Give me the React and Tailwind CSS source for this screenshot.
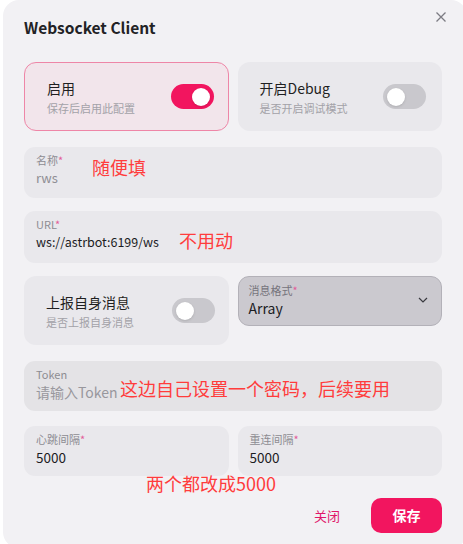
import React from "react";

const font = { fontFamily: '"Noto Sans CJK SC", Inter, "Noto Sans", sans-serif' };

function Toggle({ on }) {
  return (
    <div
      className={`relative h-[25px] w-[43px] shrink-0 rounded-full ${on ? "bg-[#f2155f]" : "bg-[#c9c8cd]"}`}
    >
      <div
        className={`absolute top-[3.5px] h-[18px] w-[18px] rounded-full bg-white shadow-sm ${on ? "left-[21px]" : "left-[4px]"}`}
      />
    </div>
  );
}

function SwitchCard({ title, sub, on, active, pr = "pr-[14px]" }) {
  return (
    <div
      className={`flex h-[69px] items-center justify-between rounded-[12px] pl-[22px] ${pr} ${
        active ? "border border-[#ee86a7] bg-[#f2e5eb]" : "bg-[#e9e8ec]"
      }`}
    >
      <div className="flex flex-col">
        <div className="text-[14px] leading-[20px] text-[#1f1f22]">{title}</div>
        <div className="mt-[2px] text-[11px] leading-[16px] text-[#a3a2a8]">{sub}</div>
      </div>
      <Toggle on={on} />
    </div>
  );
}

function Field({ label, required, value, valueClass = "text-[#1c1c1f] text-[13px]", h = "h-[51px]", bg = "bg-[#e9e8ec]" }) {
  return (
    <div className={`relative flex ${h} flex-col rounded-[11px] ${bg} pl-[12px] pt-[5px]`}>
      <div className="text-[11px] leading-[16px] text-[#8d8c92]">
        {label}
        {required && <span className="text-[#e25d9a]">*</span>}
      </div>
      <div className={`leading-[20px] ${valueClass}`}>{value}</div>
    </div>
  );
}

const Note = ({ className, children }) => (
  <div className={`absolute whitespace-nowrap text-[18px] leading-[22px] text-[#ff3c3c] ${className}`}>{children}</div>
);

export default function App() {
  return (
    <div className="h-[544px] w-[463px] overflow-hidden bg-white" style={font}>
      <div className="relative ml-[3px] h-[548px] w-[464px] rounded-[16px] bg-[#f2f1f4] pl-[21px] pr-[25px] pt-[15px]">
        <div className="absolute right-[20px] top-[11px] text-[#7c7b82]">
          <svg width="12" height="12" viewBox="0 0 12 12" fill="none" stroke="currentColor" strokeWidth="1.3">
            <path d="M1.5 1.5 L10.5 10.5 M10.5 1.5 L1.5 10.5" />
          </svg>
        </div>
        <div className="text-[15.5px] font-bold leading-[24px] text-[#222225]">Websocket Client</div>

        <div className="mt-[23px] grid grid-cols-2 gap-[9px]">
          <SwitchCard title="启用" sub="保存后启用此配置" on active />
          <SwitchCard title="开启Debug" sub="是否开启调试模式" on={false} pr="pr-[16px]" />
        </div>

        <div className="mt-[16px]">
          <Field label="名称" required value="rws" valueClass="text-[#8f8e94] text-[13px]" />
        </div>
        <div className="mt-[13px]">
          <Field label="URL" required value="ws://astrbot:6199/ws" valueClass="text-[#1c1c1f] text-[12.5px]" h="h-[52px]" />
        </div>

        <div className="mt-[13px] grid grid-cols-2 items-start gap-[9px]">
          <SwitchCard title="上报自身消息" sub="是否上报自身消息" on={false} />
          <div className="relative flex h-[50px] flex-col rounded-[11px] border border-[#b3b1b8] bg-[#cbc9cf] pl-[10px] pt-[5px]">
            <div className="text-[11px] leading-[16px] text-[#76747c]">
              消息格式<span className="text-[#e25d9a]">*</span>
            </div>
            <div className="text-[14px] leading-[20px] text-[#1c1c1f]">Array</div>
            <svg className="absolute right-[13px] top-[20px]" width="10" height="6" viewBox="0 0 10 6" fill="none" stroke="#3a3a40" strokeWidth="1.2">
              <path d="M1 1 L5 5 L9 1" />
            </svg>
          </div>
        </div>

        <div className="mt-[16px]">
          <Field label="Token" value="请输入Token" valueClass="text-[#98979d] text-[14px]" h="h-[50px]" bg="bg-[#e4e3e6]" />
        </div>

        <div className="mt-[15px] grid grid-cols-2 gap-[9px]">
          <Field label="心跳间隔" required value="5000" valueClass="text-[#1c1c1f] text-[13.5px]" h="h-[50px]" />
          <Field label="重连间隔" required value="5000" valueClass="text-[#1c1c1f] text-[13.5px]" h="h-[50px]" />
        </div>

        <div className="mt-[22px] flex items-center justify-end">
          <div className="mr-[31px] text-[13px] text-[#e0176a]">关闭</div>
          <div className="flex h-[35px] w-[71px] items-center justify-center rounded-[10px] bg-[#f2155f] text-[14px] font-bold text-white">
            保存
          </div>
        </div>

        <Note className="left-[89px] top-[156px]">随便填</Note>
        <Note className="left-[176px] top-[229px]">不用动</Note>
        <Note className="left-[117px] top-[377px]">这边自己设置一个密码，后续要用</Note>
        <Note className="left-[143px] top-[472px]">两个都改成5000</Note>
      </div>
    </div>
  );
}
